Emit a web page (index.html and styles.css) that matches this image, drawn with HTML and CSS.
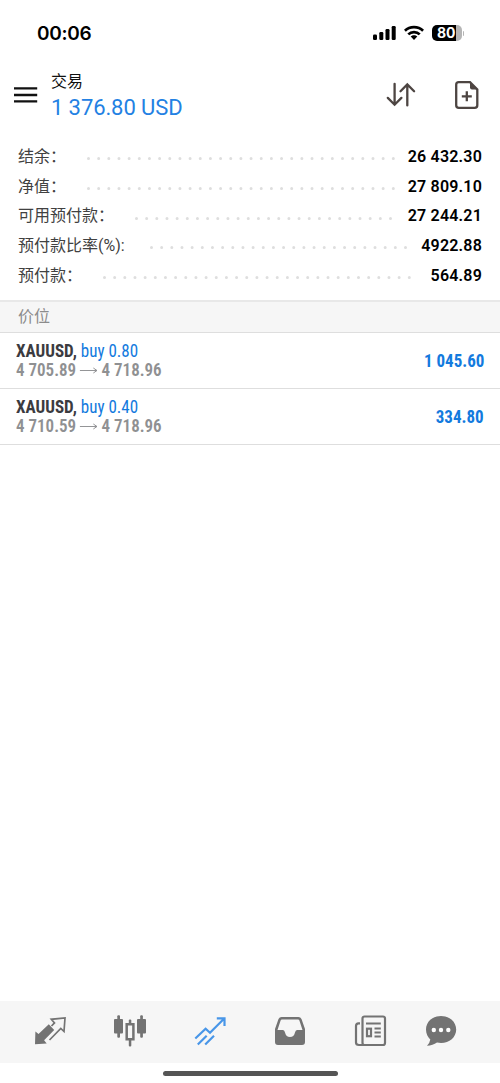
FILE: index.html
```html
<!DOCTYPE html>
<html lang="zh-CN">
<head>
<meta charset="utf-8">
<meta name="viewport" content="width=device-width, initial-scale=1">
<title>交易</title>
<link rel="stylesheet" href="styles.css">
</head>
<body>
<div class="screen">
  <div class="status">
    <span class="clock">00:06</span>
    <div class="status-icons">
      <svg width="24" height="16" viewBox="0 0 24 16"><rect x="0" y="9.5" width="4" height="5.5" rx="1.2"/><rect x="6.3" y="7" width="4" height="8" rx="1.2"/><rect x="12.5" y="4" width="4" height="11" rx="1.2"/><rect x="18.700" y="1" width="4" height="14" rx="1.2"/></svg>
      <svg width="20" height="16" viewBox="0 0 20 16" fill="none" stroke="#000" stroke-width="2.700"><path d="M.9 5.7C5.8.8 14.2.8 19.100 5.700"/><path d="M4.300 9.400C7.300 6.300 12.700 6.300 15.700 9.400"/><path d="M6.700 11.500C8.500 9.700 11.500 9.700 13.300 11.500L10 14.900Z" fill="#000" stroke="none"/></svg>
      <div class="battery-wrap"><div class="battery"><span class="battery-level">80</span></div><span class="nub"></span></div>
    </div>
  </div>
  <header class="header">
    <svg class="menu" width="24" height="18" viewBox="0 0 24 18" stroke="#111" stroke-width="2.300"><path d="M0 2.400H23.200M0 9H23.200M0 15.400H23.200"/></svg>
    <div class="titles">
      <div class="title">交易</div>
      <div class="profit">1 376.80 USD</div>
    </div>
    <svg class="sort" width="30" height="26" viewBox="0 0 30 26" fill="none" stroke="#4d4542" stroke-width="2.300" stroke-linecap="round"><path d="M8.600 1.800V22.800M1.800 15.900L8.600 22.700L15.400 15.900"/><path d="M21.300 23.400V2.400M14.500 9.200L21.300 2.400L28.100 9.200"/></svg>
    <svg class="add" width="24" height="30" viewBox="0 0 24 30" fill="none" stroke="#4d4542" stroke-width="2.300"><path d="M15 2.200H3.800Q1.200 2.200 1.200 4.800V25.200Q1.200 27.800 3.800 27.800H19.700Q22.300 27.800 22.300 25.200V9.500L15 2.200Z"/><path d="M15 1.800V7.600Q15 9.600 17 9.600H22.800Z" fill="#4d4542" stroke="none"/><path d="M6.800 16.300H16.800M11.800 11.300V21.300"/></svg>
  </header>
  <section class="summary">
    <div class="stat"><span class="name n2">结余：</span><svg class="dots d1"><path d="M1.500 2.500H309"/></svg><span class="value">26 432.30</span></div>
    <div class="stat"><span class="name n2">净值：</span><svg class="dots d1"><path d="M1.500 2.500H309"/></svg><span class="value">27 809.10</span></div>
    <div class="stat"><span class="name n5">可用预付款：</span><svg class="dots d2"><path d="M1.500 2.500H257"/></svg><span class="value">27 244.21</span></div>
    <div class="stat"><span class="name n6">预付款比率(%):</span><svg class="dots d2"><path d="M1.500 2.500H257"/></svg><span class="value">4922.88</span></div>
    <div class="stat"><span class="name n3">预付款：</span><svg class="dots d1"><path d="M1.500 2.500H309"/></svg><span class="value">564.89</span></div>
  </section>
  <div class="section-title">价位</div>
  <div class="position">
    <div class="info">
      <div class="deal"><b>XAUUSD,</b> <span class="side">buy 0.80</span></div>
      <div class="prices"><span>4 705.89</span><svg width="20" height="8" viewBox="0 0 20 8"><path d="M0 3.500H19M15 1L19 3.500L15 6"/></svg><span>4 718.96</span></div>
    </div>
    <div class="gain">1 045.60</div>
  </div>
  <div class="position">
    <div class="info">
      <div class="deal"><b>XAUUSD,</b> <span class="side">buy 0.40</span></div>
      <div class="prices"><span>4 710.59</span><svg width="20" height="8" viewBox="0 0 20 8"><path d="M0 3.500H19M15 1L19 3.500L15 6"/></svg><span>4 718.96</span></div>
    </div>
    <div class="gain">334.80</div>
  </div>
  <main class="empty"></main>
  <nav class="tabs">
    <svg width="32" height="32" viewBox="0 0 32 32"><path fill="#737373" d="M1.400 16.500L4.500 19L14.800 9.300L20.200 15L10.100 25.300L12.700 28.500L1 29.200Z"/><path fill="none" stroke="#737373" stroke-width="1.700" d="M17.500 11L20.500 7.900L17.300 4.300L31 3L30 16.500L26.800 13.500L15.500 25"/></svg>
    <svg width="34" height="34" viewBox="0 0 34 34" fill="#737373"><rect x="1" y="5" width="9" height="14.500" rx="1"/><rect x="4.300" y="1.200" width="2.700" height="22.500" rx="1"/><rect x="24" y="5" width="9" height="14.500" rx="1"/><rect x="27.200" y="1.200" width="2.700" height="22.500" rx="1"/><rect x="15.800" y="5.500" width="2.500" height="5" rx="1"/><rect x="15.800" y="24" width="2.500" height="8.500" rx="1"/><path fill="none" stroke="#737373" stroke-width="2.500" d="M13.700 10.300H20.400V25.200H13.700Z"/></svg>
    <svg width="32" height="32" viewBox="0 0 32 32" fill="none" stroke="#4896e8" stroke-width="2.200"><path d="M1.300 23.500L11.600 13.800L16 17.800L30 3.800M22.800 3.300H30.500V11"/><path d="M3.800 29.500L12.700 20.800M11.200 29.500L20 20.800"/></svg>
    <svg width="32" height="32" viewBox="0 0 32 32"><path fill="#737373" fill-rule="evenodd" d="M7.500 2H24.500Q26.500 2 27.500 4L31 14V27Q31 30 28 30H4Q1 30 1 27V14L4.500 4Q5.500 2 7.500 2ZM8 4.400Q7 4.400 6.600 5.500L3.500 15H9Q10.500 15 11 17.500Q12 22 16 22Q20 22 21 17.500Q21.500 15 23 15H28.500L25.400 5.500Q25 4.400 24 4.400Z"/></svg>
    <svg width="34" height="32" viewBox="0 0 34 32" fill="none" stroke="#737373" stroke-width="2.200"><rect x="9.500" y="1.500" width="22.500" height="28.500" rx="2"/><path d="M7 8.300H5.500Q3 8.300 3 11V27.500Q3 30 6 30H12"/><path d="M13 8.500H27.800M21.500 13.500H27.800M21.500 17.500H27.800M21.500 21.500H27.800"/><rect x="14" y="13.700" width="4" height="7.500"/></svg>
    <svg width="34" height="34" viewBox="0 0 34 34"><path fill="#737373" d="M17 2C8.500 2 2 7.800 2 15.500C2 19.800 3.800 23 6.300 25.500Q5.800 29 3 31.800Q8.800 31.700 13 28.600Q15 29 17 29C25.500 29 32.200 23.200 32.200 15.500C32.200 7.800 25.500 2 17 2Z"/><g fill="#fff"><circle cx="9.800" cy="16" r="2.200"/><circle cx="17" cy="16" r="2.200"/><circle cx="24.300" cy="16" r="2.200"/></g></svg>
  </nav>
  <div class="home"><span class="home-bar"></span></div>
</div>
</body>
</html>
```
FILE: styles.css
```css
* { box-sizing: border-box; }
body { margin: 0; background: #fff; font-family: Roboto, "Noto Sans CJK SC", sans-serif; color: #000; }
svg { display: block; flex: none; }
.screen { width: 500px; height: 1083px; display: flex; flex-direction: column; overflow: hidden; }
.screen > * { flex: none; }
.status { height: 66px; padding: 0 36px 0 37px; display: flex; align-items: center; justify-content: space-between; }
.clock { font: 600 19px/24px Inter, sans-serif; letter-spacing: -.3px; padding-top: 2px; }
.status-icons { display: flex; align-items: center; gap: 7px; }
.battery-wrap { display: flex; align-items: center; gap: 1px; margin-left: 1px; }
.battery { width: 30px; height: 16px; border-radius: 5px; background: linear-gradient(90deg, #000 80%, #b5b5b5 80%); color: #fff; display: flex; align-items: center; padding-left: 5px; }
.nub { width: 1px; height: 5px; border-radius: 0 1px 1px 0; background: #b5b5b5; }
.battery-level { font: 700 14px/16px Inter, sans-serif; }
.header { height: 74px; display: flex; padding: 5px 21px 0 13.500px; }
.menu { margin-top: 15px; }
.titles { margin-left: 13.500px; flex: 1; }
.title { font-size: 16px; line-height: 22px; color: #111; }
.profit { font-size: 22px; line-height: 30px; letter-spacing: -.1px; color: #2381e3; white-space: nowrap; }
.sort { margin: 11px 2px 0 0; }
.add { margin: 9px 0 0 37.500px; }
.summary { height: 160px; padding: 2px 18px 0; }
.stat { height: 29.700px; display: flex; align-items: center; font-size: 16px; line-height: 24px; }
.name { color: #414141; white-space: nowrap; }
.n2 { width: 69px; }
.n5 { width: 117px; }
.n6 { width: 132px; }
.n3 { width: 85px; }
.dots { height: 5px; margin-top: 4px; fill: none; stroke: #dedede; stroke-width: 3; stroke-linecap: round; stroke-dasharray: 0 10.160; }
.d1 { width: 311px; }
.d2 { width: 259px; }
.value { flex: 1; text-align: right; font-weight: 600; letter-spacing: .2px; white-space: nowrap; }
.section-title { height: 33px; padding: 0 18px; border-top: 2px solid #e8e8e8; border-bottom: 1px solid #dedede; background: #f6f6f6; color: #8c8c8c; font-size: 16px; line-height: 29px; }
.position { height: 56px; border-bottom: 1px solid #dedede; padding: 8px 16px 0; display: flex; justify-content: space-between; font-family: "Roboto Condensed", Roboto, sans-serif; font-stretch: 75%; font-size: 18.700px; }
.info { transform: scaleX(.91); transform-origin: left; }
.deal { line-height: 20px; color: #3b3b3f; white-space: nowrap; }
.deal b { font-weight: 700; }
.side { color: #137ade; }
.prices { display: flex; align-items: center; gap: 4px; line-height: 19px; font-weight: 600; color: #8f9092; }
.prices path { fill: none; stroke: #8f9092; stroke-width: 1; }
.gain { line-height: 40px; font-weight: 700; color: #137ade; transform: scaleX(.91); transform-origin: right; }
.empty { flex: 1 1 0; }
.tabs { height: 62px; background: #f6f6f6; display: grid; grid-template-columns: repeat(5, 80px) 62px; align-items: center; justify-items: center; padding: 0 28px 2px 10px; }
.home { height: 20px; display: flex; justify-content: center; align-items: center; }
.home-bar { width: 175px; height: 5px; border-radius: 3px; background: #555; }
```
